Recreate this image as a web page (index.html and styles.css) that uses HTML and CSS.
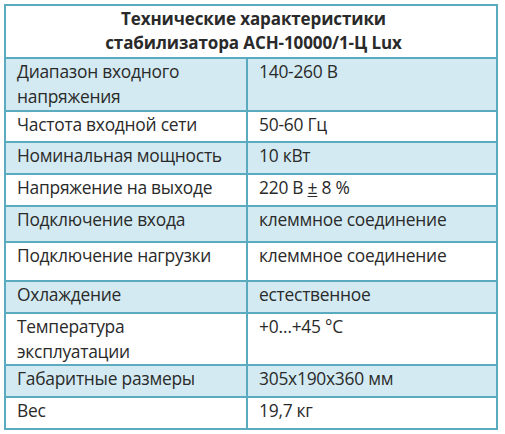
FILE: index.html
```html
<!DOCTYPE html>
<html lang="ru">
<head>
<meta charset="utf-8">
<title>Технические характеристики</title>
<link rel="stylesheet" href="styles.css">
</head>
<body>
<table class="spec">
  <colgroup><col class="col-name"><col class="col-value"></colgroup>
  <thead>
    <tr class="h-head"><th colspan="2">Технические характеристики<br>стабилизатора АСН-10000/1-Ц Lux</th></tr>
  </thead>
  <tbody>
    <tr class="blue h-52"><td>Диапазон входного<br>напряжения</td><td>140-260 В</td></tr>
    <tr class="h-31"><td>Частота входной сети</td><td>50-60 Гц</td></tr>
    <tr class="blue h-32"><td>Номинальная мощность</td><td>10 кВт</td></tr>
    <tr class="h-32"><td>Напряжение на выходе</td><td>220 В <u>±</u> 8 %</td></tr>
    <tr class="blue h-36"><td>Подключение входа</td><td>клеммное соединение</td></tr>
    <tr class="h-39"><td>Подключение нагрузки</td><td>клеммное соединение</td></tr>
    <tr class="blue h-32"><td>Охлаждение</td><td>естественное</td></tr>
    <tr class="h-51"><td>Температура<br>эксплуатации</td><td>+0…+45 °С</td></tr>
    <tr class="blue h-32"><td>Габаритные размеры</td><td>305х190х360 мм</td></tr>
    <tr class="h-32"><td>Вес</td><td>19,7 кг</td></tr>
  </tbody>
</table>
</body>
</html>
```
FILE: styles.css
```css
html, body {
  margin: 0;
  padding: 0;
  background: #ffffff;
}
body {
  padding: 4px 0 0 4px;
}
.spec {
  border-collapse: collapse;
  width: 492px;
  font-family: "Open Sans", "Liberation Sans", sans-serif;
  color: #2a2a2a;
  table-layout: fixed;
}
.col-name { width: 242px; }
.col-value { width: 250px; }
.spec th,
.spec td {
  border: 2px solid #5aaac0;
  vertical-align: top;
  text-align: left;
  padding: 0 6px 0 11px;
  font-size: 17.4px;
  line-height: 25px;
  font-weight: 400;
  letter-spacing: -0.25px;
}
.spec th {
  text-align: center;
  font-weight: 700;
  font-size: 17px;
  line-height: 24px;
  padding-top: 1px;
  letter-spacing: -0.1px;
}
.h-head { height: 53px; }
.blue td { background: #d3eaf2; }
.h-31 { height: 31px; }
.h-32 { height: 32px; }
.h-36 { height: 36px; }
.h-39 { height: 39px; }
.h-51 { height: 51px; }
.h-52 { height: 53px; }
u { text-decoration-thickness: 1px; text-underline-offset: 2px; }
```
